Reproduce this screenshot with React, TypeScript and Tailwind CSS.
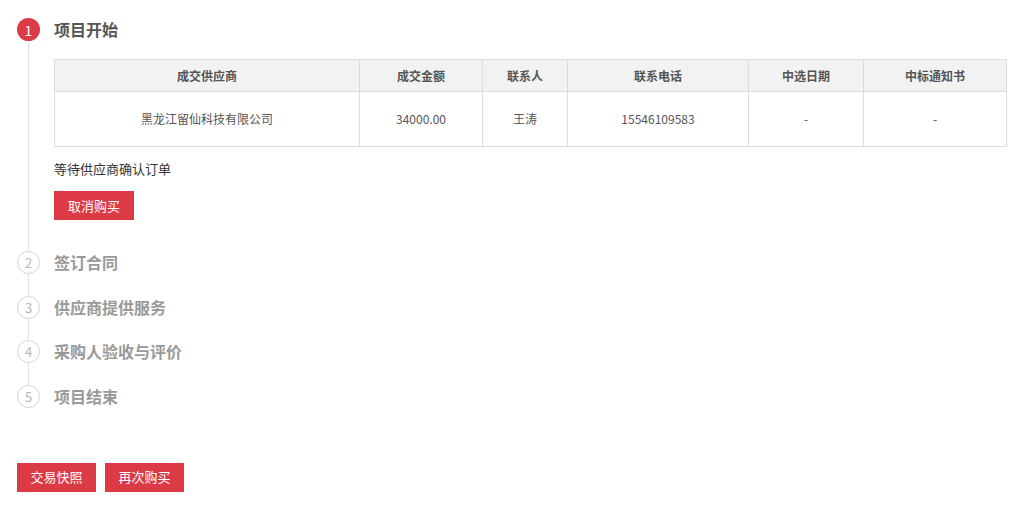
import React from "react";

const COLUMNS = [
  { label: "成交供应商", width: 305 },
  { label: "成交金额", width: 123 },
  { label: "联系人", width: 85 },
  { label: "联系电话", width: 181 },
  { label: "中选日期", width: 115 },
  { label: "中标通知书", width: 143 },
];

const ROW = ["黑龙江留仙科技有限公司", "34000.00", "王涛", "15546109583", "-", "-"];

const PENDING_STEPS = ["签订合同", "供应商提供服务", "采购人验收与评价", "项目结束"];

function StepCircle({ n, active }: { n: number; active?: boolean }) {
  return active ? (
    <div className="w-[23px] h-[23px] rounded-full bg-[#dc3a45] text-white text-[14px] leading-none flex items-center justify-center shrink-0">
      {n}
    </div>
  ) : (
    <div className="w-[23px] h-[23px] rounded-full border border-[#d4d4d4] text-[#b5b5b5] text-[13px] leading-none flex items-center justify-center shrink-0">
      {n}
    </div>
  );
}

export default function App() {
  return (
    <div
      className="w-[1029px] h-[531px] bg-white pl-[17px] pr-[23px] pt-[18px]"
      style={{ fontFamily: '"Noto Sans CJK SC", "Noto Sans", sans-serif' }}
    >
      {/* Step 1 - active */}
      <div className="flex">
        <div className="flex flex-col items-center w-[23px]">
          <StepCircle n={1} active />
          <div className="w-px flex-1 bg-[#e2e2e2]" />
        </div>
        <div className="flex-1 ml-[14px] pb-[31px]">
          <div className="h-[23px] leading-[23px] text-[16px] font-bold text-[#555]">项目开始</div>
          <table className="mt-[18px] w-full table-fixed border-collapse text-[12px] text-[#555]">
            <colgroup>
              {COLUMNS.map((c) => (
                <col key={c.label} style={{ width: c.width }} />
              ))}
            </colgroup>
            <thead>
              <tr className="bg-[#f2f2f2] h-[32px]">
                {COLUMNS.map((c) => (
                  <th key={c.label} className="border border-[#dddddd] font-bold text-center">
                    {c.label}
                  </th>
                ))}
              </tr>
            </thead>
            <tbody>
              <tr className="h-[55px]">
                {ROW.map((v, i) => (
                  <td key={i} className="border border-[#dddddd] text-center">
                    {v}
                  </td>
                ))}
              </tr>
            </tbody>
          </table>
          <div className="mt-[14px] text-[13px] leading-[16px] text-[#333]">等待供应商确认订单</div>
          <button className="mt-[14px] w-[80px] h-[29px] bg-[#dc3a45] text-white text-[13px]">取消购买</button>
        </div>
      </div>

      {/* Remaining steps */}
      {PENDING_STEPS.map((title, i) => {
        const last = i === PENDING_STEPS.length - 1;
        return (
          <div key={title} className="flex">
            <div className="flex flex-col items-center w-[23px]">
              <StepCircle n={i + 2} />
              {!last && <div className="w-px flex-1 bg-[#e2e2e2]" />}
            </div>
            <div className={`flex-1 ml-[14px] ${last ? "" : "pb-[21.5px]"}`}>
              <div className="h-[23px] leading-[23px] text-[16px] font-bold text-[#999]">{title}</div>
            </div>
          </div>
        );
      })}

      {/* Footer buttons */}
      <div className="flex gap-[9px] mt-[55px]">
        <button className="w-[79px] h-[29px] bg-[#dc3a45] text-white text-[13px]">交易快照</button>
        <button className="w-[79px] h-[29px] bg-[#dc3a45] text-white text-[13px]">再次购买</button>
      </div>
    </div>
  );
}
